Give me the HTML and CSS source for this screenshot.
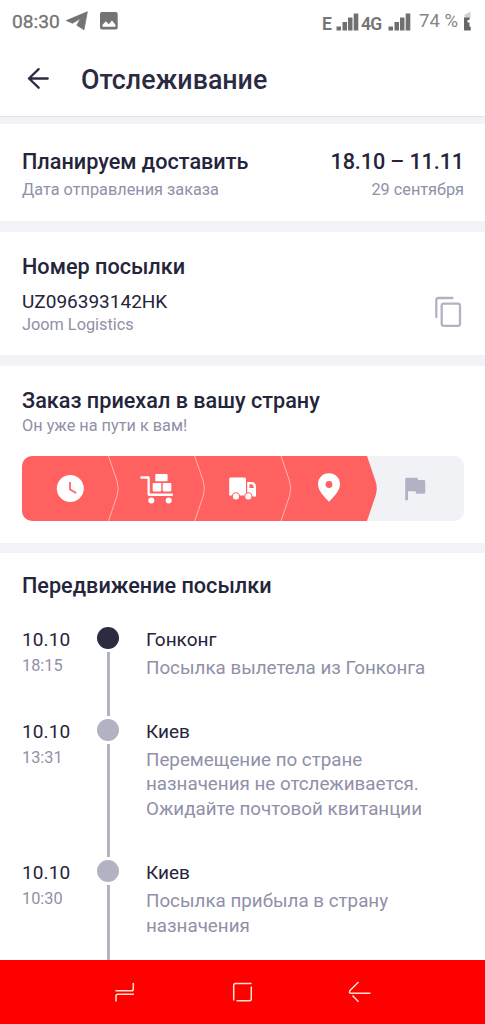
FILE: index.html
```html
<!DOCTYPE html>
<html lang="ru">
<head>
<meta charset="utf-8">
<title>Отслеживание</title>
<link rel="stylesheet" href="styles.css">
</head>
<body>
<div class="screen">
  <div class="status">
    <span class="clock">08:30</span>
    <svg class="telegram" width="22" height="20" viewBox="0 0 22 20"><path d="M.3 9.600 21.300.8 18 18.800 10.800 14.200 14.500 7.500 6.500 12.200Z" fill="#747474" stroke="#747474" stroke-width=".8" stroke-linejoin="round"/></svg>
    <svg class="photo" width="18" height="18" viewBox="0 0 18 18"><rect width="17.700" height="17.500" rx="2" fill="#747474"/><path d="M2.500 14.800v-2L6 9.200l2.600 3L12 8.600l3.400 4.200v2Z" fill="#fff"/></svg>
    <span class="net net-e">E</span>
    <svg class="bars" width="23" height="18" viewBox="0 0 23 18"><path d="M.5 13.500H5V17.500H.5ZM6.500 9H11v8.500H6.500ZM12 4.500h4.500v13H12ZM17.700.5h4.600v17h-4.600Z" fill="#707070"/></svg>
    <span class="net net-4g">4G</span>
    <svg class="bars" width="23" height="18" viewBox="0 0 23 18"><path d="M.5 13.500H5V17.500H.5ZM6.500 9H11v8.500H6.500ZM12 4.500h4.500v13H12ZM17.700.5h4.600v17h-4.600Z" fill="#707070"/></svg>
    <span class="percent">74 %</span>
    <svg class="battery" width="8" height="20" viewBox="0 0 8 20"><path d="M.5 3.500 3 2.500 6.500.5V7H.5Z" fill="#d2d2d2"/><path d="M0 6.500H5.500V9H3.500V11.500H5.500V15.500L6.800 16V19.500H0Z" fill="#666"/></svg>
  </div>
  <header class="appbar">
    <svg class="back" width="22" height="22" viewBox="0 0 22 22" fill="none" stroke="#2b2b42" stroke-width="2.300" stroke-linecap="round" stroke-linejoin="round"><path d="M20.700 11.500H2M11.600 2.100 2 11.500l9.600 9.200"/></svg>
    <h1 class="title">Отслеживание</h1>
  </header>
  <section class="card delivery">
    <div class="row"><h2 class="heading">Планируем доставить</h2><span class="heading dates">18.10 – 11.11</span></div>
    <div class="row note-row"><span class="note">Дата отправления заказа</span><span class="note">29 сентября</span></div>
  </section>
  <section class="card parcel">
    <div>
      <h2 class="heading">Номер посылки</h2>
      <div class="number">UZ096393142HK</div>
      <div class="note carrier">Joom Logistics</div>
    </div>
    <svg class="copy" width="28" height="32" viewBox="0 0 28 32" fill="none" stroke="#b2b2c3" stroke-width="2.300" stroke-linecap="round"><path d="M2.300 21V4.200Q2.300 2 4.500 2H18.500"/><rect x="7.700" y="7.600" width="18.300" height="22.200" rx="2"/></svg>
  </section>
  <section class="card state">
    <h2 class="heading">Заказ приехал в вашу страну</h2>
    <div class="note arrived">Он уже на пути к вам!</div>
    <div class="progress">
      <svg width="442" height="65" viewBox="0 0 442 65">
        <path d="M0 0H345L353.500 25Q356 32.500 353.500 40L345 65H0Z" fill="#ff6161"/>
        <g fill="none" stroke="#ffb5b2" stroke-width="1">
          <path d="M86.500 0 95 25Q97.500 32.500 95 40L86.500 65"/>
          <path d="M172.700 0 181.200 25Q183.700 32.500 181.200 40L172.700 65"/>
          <path d="M259 0 267.500 25Q270 32.500 267.500 40L259 65"/>
        </g>
        <circle cx="48.300" cy="32.500" r="13.500" fill="#fff"/>
        <path d="M48 26v7.500L54.300 37" fill="none" stroke="#ff6161" stroke-width="1.700"/>
        <g fill="#fff">
          <path d="M118.500 20.200H126.200Q127.800 20.200 127.800 21.800V37.500H150.800V40H127.600Q125.500 40 125.500 38.200V22.700H118.500Z"/>
          <rect x="133.300" y="18" width="12.300" height="7.200" rx=".8"/>
          <rect x="130.700" y="27" width="8.600" height="8.400" rx=".8"/>
          <rect x="140.700" y="27" width="8.600" height="8.400" rx=".8"/>
          <circle cx="129.300" cy="44.600" r="3"/><circle cx="146.700" cy="44.600" r="3"/>
          <path d="M208.500 21.500H222.500Q224 21.500 224 23V39.500H207.200V23Q207.200 21.500 208.500 21.500Z"/>
          <path d="M225.200 26H230.500Q234 26.500 234 31V40.500H225.200Z"/>
        </g>
        <path d="M227.500 28.300H229.500Q231.800 29 231.800 32H227.500Z" fill="#ff6161"/>
        <g fill="#fff" stroke="#ff6161" stroke-width="1.100"><circle cx="213.900" cy="40.400" r="3.600"/><circle cx="226.300" cy="40.400" r="3.600"/></g>
        <path d="M307 17.300C300.600 17.300 296 22 296 28.200 296 34.500 302 40.500 307 45.800 312 40.500 318 34.500 318 28.200 318 22 313.400 17.300 307 17.300Z" fill="#fff"/>
        <circle cx="307" cy="28.500" r="3.400" fill="#ff6161"/>
        <path d="M384.500 21.700H395.200L396.200 24H401.900Q403.200 24 403.200 25.300V36.500Q403.200 37.700 402 37.700H394.500L393.400 35.200H386V44.200H383.200V23Q383.200 21.700 384.500 21.700Z" fill="#b2b2c3"/>
      </svg>
    </div>
  </section>
  <section class="card history">
    <h2 class="heading">Передвижение посылки</h2>
    <ol class="timeline">
      <li class="event">
        <div class="when"><div class="date">10.10</div><div class="note time">18:15</div></div>
        <div class="track"><i class="dot dot-current"></i><i class="line"></i></div>
        <div class="info"><div class="place">Гонконг</div><p class="desc">Посылка вылетела из Гонконга</p></div>
      </li>
      <li class="event event-tall">
        <div class="when"><div class="date">10.10</div><div class="note time">13:31</div></div>
        <div class="track"><i class="dot"></i><i class="line"></i></div>
        <div class="info"><div class="place">Киев</div><p class="desc">Перемещение по стране<br>назначения не отслеживается.<br>Ожидайте почтовой квитанции</p></div>
      </li>
      <li class="event event-last">
        <div class="when"><div class="date">10.10</div><div class="note time">10:30</div></div>
        <div class="track"><i class="dot"></i><i class="line"></i></div>
        <div class="info"><div class="place">Киев</div><p class="desc">Посылка прибыла в страну<br>назначения</p></div>
      </li>
    </ol>
  </section>
  <nav class="navbar">
    <svg width="20" height="20" viewBox="0 0 20 20" fill="none" stroke="#ffe3d6" stroke-width="1.500"><path d="M.5 8.800H16.500Q18.300 8.800 18.300 7V1M19 12.200H2.800Q1 12.200 1 14V19.500"/></svg>
    <svg width="20" height="20" viewBox="0 0 20 20" fill="none" stroke="#ffe3d6" stroke-width="1.500"><path d="M1.700 18.500V3.300Q1.700 1.500 3.500 1.500H19.500M19.300 4.500V17Q19.300 18.700 17.600 18.700H4.500"/></svg>
    <svg width="23" height="22" viewBox="0 0 23 22" fill="none" stroke="#ffe3d6" stroke-width="1.500"><path d="M10.500 1 2 9.500Q.5 12.300 3 12.300H22.500M4.500 14.500 10.500 20.800"/></svg>
  </nav>
</div>
</body>
</html>
```

FILE: styles.css
```css
* { box-sizing: border-box; }
body { margin: 0; background: #fff; font-family: Roboto, sans-serif; color: #24243a; }
h1, h2, p, ol { margin: 0; padding: 0; font-weight: 500; }
svg { display: block; flex: none; }

.screen { width: 485px; height: 1024px; display: flex; flex-direction: column; overflow: hidden; background: #f2f2f7; }

.status { height: 43px; flex: none; display: flex; align-items: flex-start; padding: 11px 0 0 12px; background: #fff; color: #747474; line-height: 20px; white-space: nowrap; }
.clock { width: 54px; padding-top: 1px; font-size: 19.200px; font-weight: 400; -webkit-text-stroke: .3px #747474; }
.photo { margin: 1px 0 0 12px; }
.net { font-weight: 600; margin-top: 3px; }
.net-e { margin-left: 204px; width: 14px; font-size: 17.500px; }
.bars { margin-top: 2px; }
.net-4g { width: 27px; margin-left: 2px; font-size: 17.500px; letter-spacing: -.8px; }
.percent { margin-left: 8px; width: 45px; font-size: 18.500px; color: #858585; }

.appbar { height: 73px; flex: none; display: flex; align-items: center; padding: 0 27px; gap: 32px; background: #fff; }
.back { margin-top: -3px; }
.title { font-size: 26.800px; line-height: 34px; color: #2b2b42; }

.card { flex: none; background: #fff; padding: 22px 21px 0 22px; }
.heading { font-size: 21.650px; line-height: 26px; font-weight: 500; }
.dates { letter-spacing: -.12px; }
.note { font-size: 16.300px; line-height: 20px; color: #9090a8; }
.row { display: flex; justify-content: space-between; }

.delivery { height: 97px; margin-top: 8px; padding-top: 25px; box-shadow: 0 -7px 0 #f2f2f7, 0 -8px 0 #e2e2e9; }
.note-row { margin-top: 5px; }

.parcel { height: 123px; margin-top: 11px; display: flex; justify-content: space-between; }
.number { margin-top: 10px; font-size: 19px; line-height: 24px; }
.carrier { margin-top: 1px; }
.copy { margin: 42px 2px 0 0; }

.state { height: 177px; margin-top: 11px; }
.arrived { margin-top: 2px; }
.progress { height: 65px; margin-top: 20px; border-radius: 10px; overflow: hidden; background: #f1f2f6; }

.history { height: 407px; margin-top: 10px; padding-top: 20px; overflow: hidden; }
.timeline { list-style: none; margin-top: 28px; }
.event { height: 91.600px; display: grid; grid-template-columns: 75px 22px 1fr; font-weight: 400; }
.event-tall { height: 141.200px; }
.event-last { height: 120px; }
.when, .info { padding-top: 1px; }
.date, .place { font-size: 19px; line-height: 24px; }
.date { letter-spacing: .1px; }
.time { margin-top: 3px; line-height: 22px; }
.track { display: flex; flex-direction: column; align-items: center; }
.dot { flex: none; width: 22px; height: 22px; border-radius: 50%; background: #b2b2c3; }
.dot-current { background: #2b2b42; }
.line { flex: 1; width: 3px; margin: 3px 0; background: #b2b2c0; }
.info { padding-left: 27px; }
.desc { margin-top: 4px; font-size: 18.800px; line-height: 24.800px; font-weight: 400; color: #9090a8; white-space: nowrap; }

.navbar { height: 64px; flex: none; display: flex; align-items: center; padding: 0 114px 0 115px; justify-content: space-between; background: #f00; }
```
